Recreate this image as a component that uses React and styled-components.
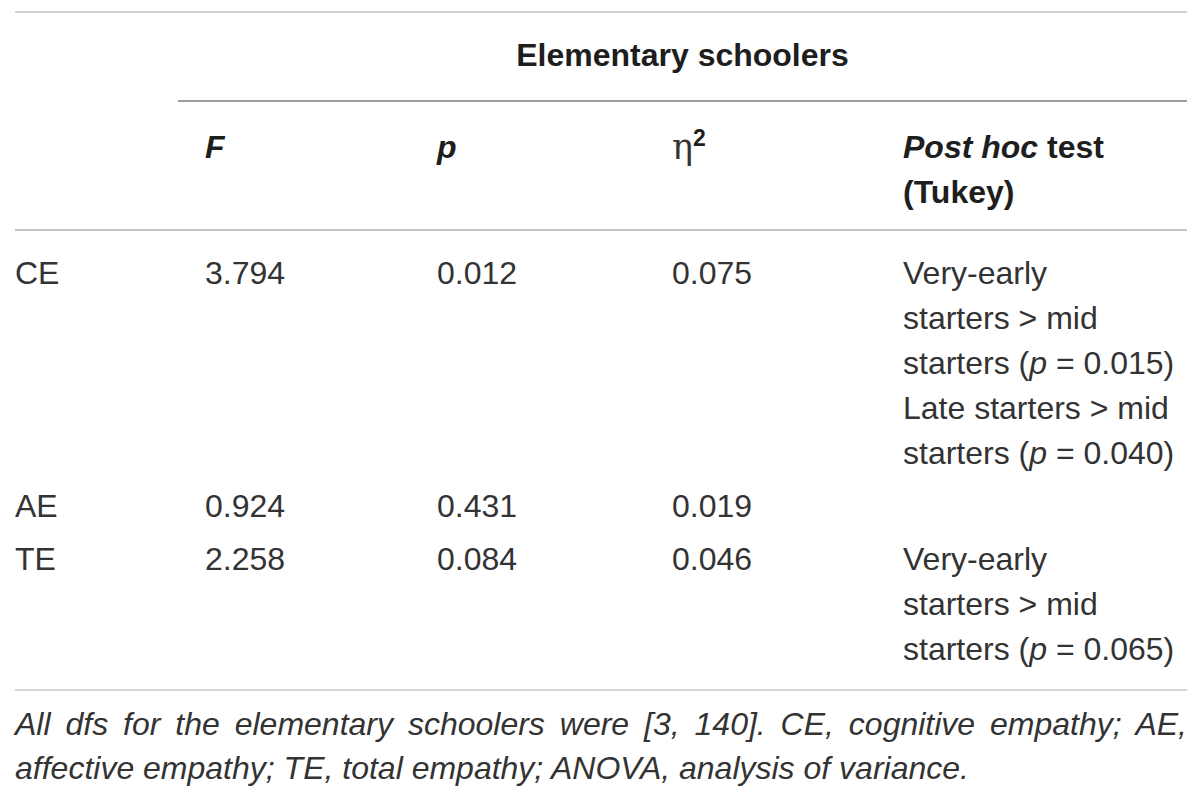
import styled, { createGlobalStyle } from 'styled-components'

const GlobalStyle = createGlobalStyle`
    html, body {
        margin: 0;
        padding: 0;
        background: #ffffff;
    }
    body {
        font-family: "Liberation Sans", Arial, Helvetica, sans-serif;
        color: #333333;
    }
`

const Page = styled.div`
    padding: 11px 13px 0 15px;
    width: 1172px;
`

const Table = styled.table`
    width: 1172px;
    border-collapse: collapse;
    table-layout: fixed;
    font-size: 32px;
    line-height: 45px;
    border-top: 2px solid #d2d2d2;
`

const GroupHead = styled.th`
    padding: 20px 0 22px;
    text-align: center;
    font-weight: 700;
    color: #1e1e1e;
    border-bottom: 2px solid #9c9c9c;
`

const HeadRow = styled.tr`
    border-bottom: 2px solid #c4c4c4;
`

const ColHead = styled.th`
    padding: 23px 0 14px ${({ $label }) => ($label ? '0' : '27px')};
    text-align: left;
    vertical-align: top;
    font-weight: 700;
    color: #1e1e1e;
`

const Eta = styled.span`
    font-weight: 400;
    font-family: "DejaVu Serif", "Liberation Serif", serif;
    font-size: 35px;
    color: #333333;
    sup {
        font-family: "Liberation Sans", Arial, sans-serif;
        font-weight: 700;
        font-size: 23px;
        vertical-align: 13px;
        line-height: 0;
        color: #1e1e1e;
    }
`

const BodyRow = styled.tr`
    border-bottom: ${({ $last }) => ($last ? '2px solid #d6d6d6' : 'none')};
`

const Cell = styled.td`
    padding-top: ${({ $first }) => ($first ? '20px' : '4px')};
    padding-bottom: ${({ $last }) => ($last ? '17px' : '4px')};
    padding-left: ${({ $label }) => ($label ? '0' : '27px')};
    padding-right: 0;
    vertical-align: top;
    text-align: left;
    color: #333333;
`

const Line = styled.span`
    display: block;
    white-space: nowrap;
`

const Note = styled.div`
    padding-top: 11px;
    font-size: 32px;
    line-height: 44px;
    font-style: italic;
    color: #333333;
`

const NoteLine = styled.span`
    display: block;
    text-align: ${({ $justify }) => ($justify ? 'justify' : 'left')};
    text-align-last: ${({ $justify }) => ($justify ? 'justify' : 'auto')};
`

const rows = [
    {
        label: 'CE', f: '3.794', p: '0.012', eta: '0.075',
        posthoc: [['Very-early'], ['starters > mid'], ['starters (', 'p', ' = 0.015)'], ['Late starters > mid'], ['starters (', 'p', ' = 0.040)']],
    },
    { label: 'AE', f: '0.924', p: '0.431', eta: '0.019', posthoc: [] },
    {
        label: 'TE', f: '2.258', p: '0.084', eta: '0.046',
        posthoc: [['Very-early'], ['starters > mid'], ['starters (', 'p', ' = 0.065)']],
    },
]

function App() {
    return (
        <Page>
            <GlobalStyle />
            <Table>
                <colgroup>
                    <col style={{ width: 163 }} />
                    <col style={{ width: 232 }} />
                    <col style={{ width: 235 }} />
                    <col style={{ width: 231 }} />
                    <col />
                </colgroup>
                <thead>
                    <tr>
                        <th />
                        <GroupHead colSpan={4}>Elementary schoolers</GroupHead>
                    </tr>
                    <HeadRow>
                        <ColHead $label />
                        <ColHead><i>F</i></ColHead>
                        <ColHead><i>p</i></ColHead>
                        <ColHead><Eta>η<sup>2</sup></Eta></ColHead>
                        <ColHead>
                            <Line><i>Post hoc</i> test</Line>
                            <Line>(Tukey)</Line>
                        </ColHead>
                    </HeadRow>
                </thead>
                <tbody>
                    {rows.map((row, i) => {
                        const first = i === 0
                        const last = i === rows.length - 1
                        return (
                            <BodyRow key={row.label} $last={last}>
                                <Cell $label $first={first} $last={last}>{row.label}</Cell>
                                <Cell $first={first} $last={last}>{row.f}</Cell>
                                <Cell $first={first} $last={last}>{row.p}</Cell>
                                <Cell $first={first} $last={last}>{row.eta}</Cell>
                                <Cell $first={first} $last={last}>
                                    {row.posthoc.map((parts, j) => (
                                        <Line key={j}>
                                            {parts.map((part, k) => (k === 1 ? <i key={k}>{part}</i> : part))}
                                        </Line>
                                    ))}
                                </Cell>
                            </BodyRow>
                        )
                    })}
                </tbody>
            </Table>
            <Note>
                <NoteLine $justify>All dfs for the elementary schoolers were [3, 140]. CE, cognitive empathy; AE,</NoteLine>
                <NoteLine>affective empathy; TE, total empathy; ANOVA, analysis of variance.</NoteLine>
            </Note>
        </Page>
    )
}

export default App
